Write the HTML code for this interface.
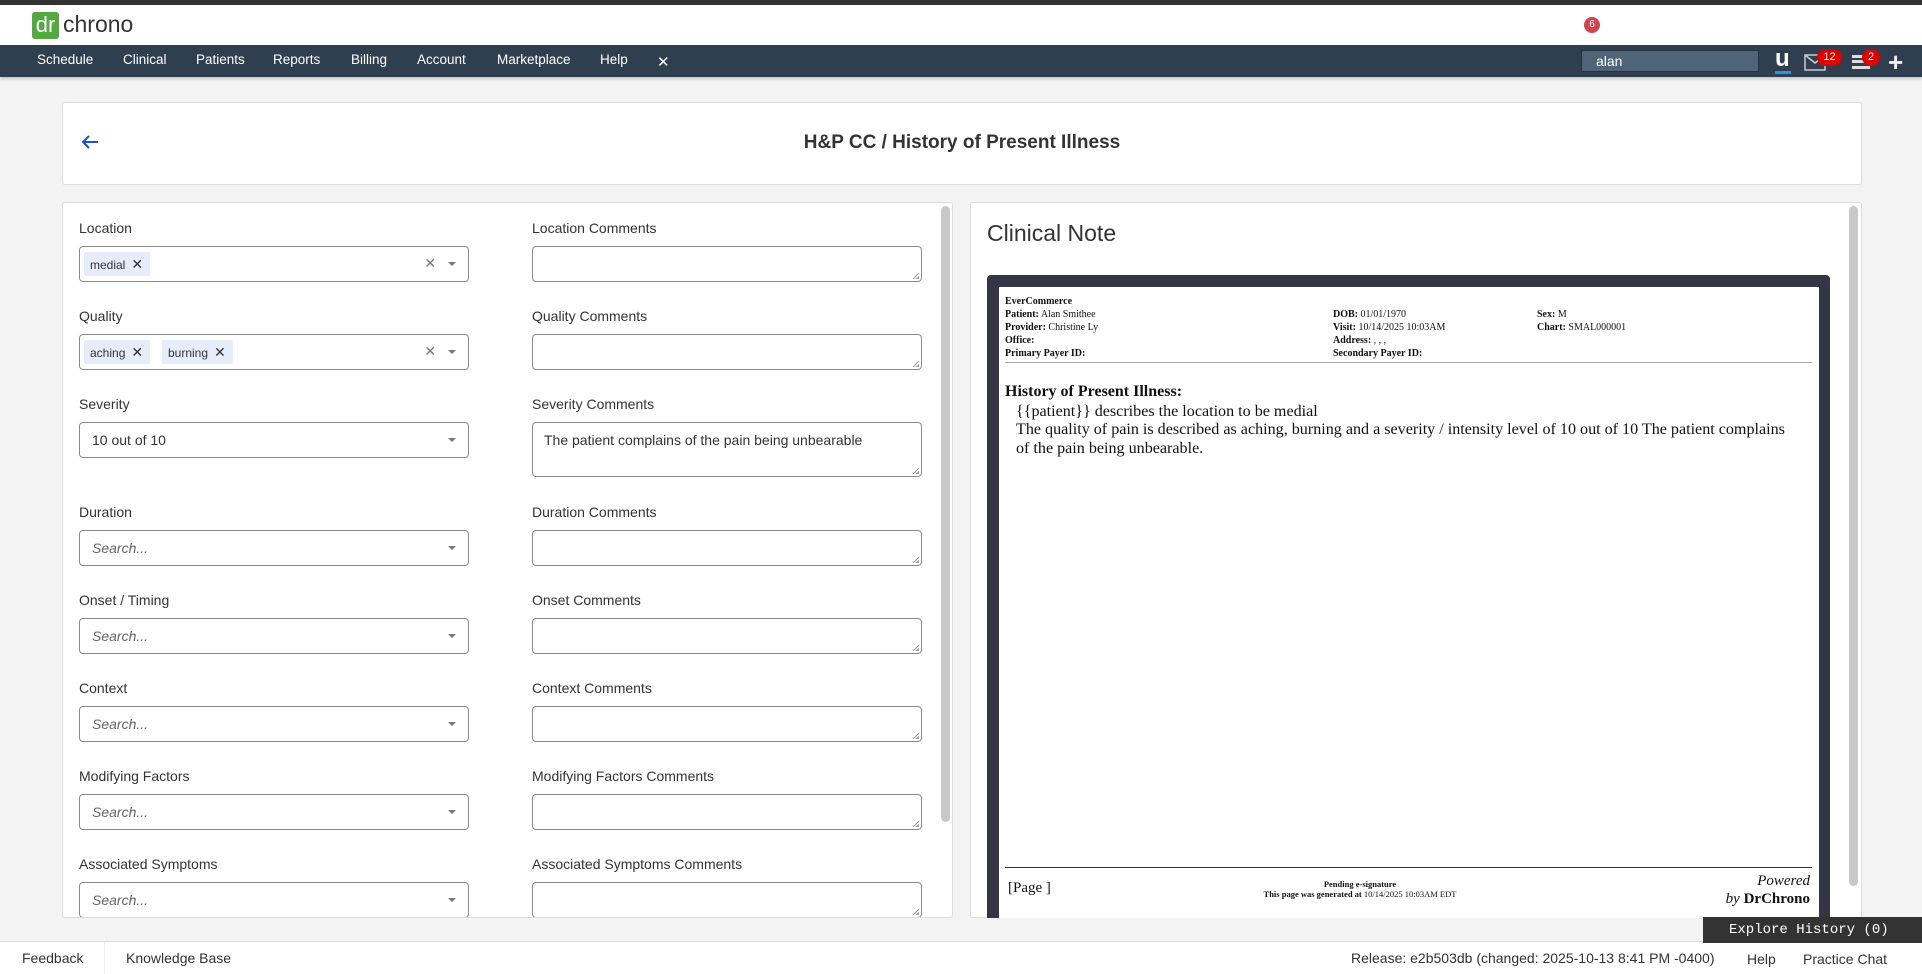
<!DOCTYPE html>
<html><head><meta charset="utf-8"><style>
*{box-sizing:border-box;margin:0;padding:0}
body{width:1922px;height:974px;overflow:hidden;background:#f3f3f3;font-family:"Liberation Sans",sans-serif;position:relative;color:#333}
.a{position:absolute}
.lab{position:absolute;font-size:14px;color:#333;white-space:nowrap}
.sel{position:absolute;width:390px;height:36px;border:1px solid #8a8a90;border-radius:4px;background:#fff}
.ta{position:absolute;width:390px;height:36px;border:1px solid #8a8a90;border-radius:4px;background:#fff}
.ta:after{content:"";position:absolute;right:2px;bottom:2px;width:6px;height:6px;background:linear-gradient(135deg,transparent 45%,#999 45%,#999 55%,transparent 55%,transparent 75%,#999 75%)}
.ph{position:absolute;left:12px;top:9px;font-size:14px;font-style:italic;color:#666}
.car{position:absolute;right:12px;top:15px;border-left:4px solid transparent;border-right:4px solid transparent;border-top:4px solid #777}
.tag{position:absolute;top:5px;height:24px;background:#e6ecfb;font-size:12px;line-height:24px;padding:0 7px 0 6px;color:#333;white-space:nowrap}
.tag b{font-weight:normal;font-size:14px;margin-left:6px}
.nav span{position:absolute;top:52px;color:#fff;font-size:13.5px}
.n{font-family:"Liberation Serif",serif;color:#111;position:absolute;white-space:nowrap}
.hd{font-size:10px}
</style></head><body>
<div class="a" style="left:0;top:0;width:1922px;height:5px;background:#333"></div>
<div class="a" style="left:0;top:5px;width:1922px;height:40px;background:#fff"></div>
<div class="a" style="left:32px;top:12px;width:27px;height:27px;background:#53a93f;border-radius:3px;color:#fff;font-size:22px;line-height:26px;text-align:center">dr</div>
<div class="a" style="left:63px;top:11px;font-size:23px;color:#333">chrono</div>
<div class="a" style="left:1584px;top:17px;width:16px;height:16px;border-radius:8px;background:#d04450;color:#fff;font-size:10px;line-height:16px;text-align:center">6</div>
<div class="a nav" style="left:0;top:45px;width:1922px;height:32px;background:#2f3f50;box-shadow:0 2px 3px rgba(0,0,0,.2)"></div>
<div class="nav">
<span style="left:37px">Schedule</span><span style="left:123px">Clinical</span><span style="left:196px">Patients</span><span style="left:273px">Reports</span><span style="left:351px">Billing</span><span style="left:417px">Account</span><span style="left:497px">Marketplace</span><span style="left:600px">Help</span><span style="left:657px;font-size:15px;top:53px">✕</span>
</div>
<div class="a" style="left:1581px;top:50px;width:178px;height:22px;background:#506479;border:1px solid #27323f;border-radius:2px;color:#fff;font-size:14px;line-height:20px;padding-left:14px">alan</div>
<div class="a" style="left:1775px;top:48px;color:#fff;font-size:24px;font-weight:bold;line-height:22px">u</div>
<div class="a" style="left:1775px;top:71px;width:16px;height:3px;background:#1b9ce4"></div>
<svg class="a" style="left:1804px;top:54px" width="22" height="17" viewBox="0 0 22 17"><rect x="1" y="1" width="20" height="15" fill="none" stroke="#ccc" stroke-width="1.5"/><path d="M1 1 L11 9 L21 1" fill="none" stroke="#ccc" stroke-width="1.5"/></svg>
<div class="a" style="left:1817px;top:49px;width:25px;height:17px;border-radius:9px;background:#d00;color:#fff;font-size:11px;line-height:17px;text-align:center">12</div>
<div class="a" style="left:1852px;top:55px;width:18px;height:14px;border-top:3px solid #ddd;border-bottom:3px solid #ddd"></div>
<div class="a" style="left:1852px;top:60px;width:18px;height:3px;background:#ddd"></div>
<div class="a" style="left:1862px;top:49px;width:18px;height:17px;border-radius:9px;background:#d00;color:#fff;font-size:11px;line-height:17px;text-align:center">2</div>
<div class="a" style="left:1888px;top:52px;color:#eee;font-size:26px;font-weight:bold;line-height:20px">+</div>

<div class="a" style="left:62px;top:102px;width:1800px;height:83px;background:#fff;border:1px solid #ddd;border-radius:3px"></div>
<svg class="a" style="left:81px;top:134px" width="18" height="16" viewBox="0 0 18 16"><path d="M17 8 H2 M8 2 L2 8 L8 14" fill="none" stroke="#1d4ed8" stroke-width="2"/></svg>
<div class="a" style="left:0;top:132px;width:1924px;text-align:center;font-size:19px;font-weight:bold;color:#333">H&amp;P CC / History of Present Illness</div>

<div class="a" style="left:62px;top:202px;width:891px;height:716px;background:#fff;border:1px solid #ddd;border-radius:3px"></div>
<div class="a" style="left:941px;top:206px;width:9px;height:616px;background:#c8c8c8;border-radius:5px"></div>

<div class="lab" style="left:79px;top:220px">Location</div><div class="lab" style="left:532px;top:220px">Location Comments</div>
<div class="sel" style="left:79px;top:246px"><div class="tag" style="left:4px">medial<b>✕</b></div><span class="a" style="right:32px;top:8px;color:#777;font-size:14px">✕</span><div class="car"></div></div>
<div class="ta" style="left:532px;top:246px"></div>

<div class="lab" style="left:79px;top:308px">Quality</div><div class="lab" style="left:532px;top:308px">Quality Comments</div>
<div class="sel" style="left:79px;top:334px"><div class="tag" style="left:4px">aching<b>✕</b></div><div class="tag" style="left:82px">burning<b>✕</b></div><span class="a" style="right:32px;top:8px;color:#777;font-size:14px">✕</span><div class="car"></div></div>
<div class="ta" style="left:532px;top:334px"></div>

<div class="lab" style="left:79px;top:396px">Severity</div><div class="lab" style="left:532px;top:396px">Severity Comments</div>
<div class="sel" style="left:79px;top:422px"><div class="ph" style="font-style:normal;color:#333">10 out of 10</div><div class="car"></div></div>
<div class="ta" style="left:532px;top:422px;height:55px"><div class="a" style="left:11px;top:9px;font-size:14px;color:#333">The patient complains of the pain being unbearable</div></div>

<div class="lab" style="left:79px;top:504px">Duration</div><div class="lab" style="left:532px;top:504px">Duration Comments</div>
<div class="sel" style="left:79px;top:530px"><div class="ph">Search...</div><div class="car"></div></div><div class="ta" style="left:532px;top:530px"></div>

<div class="lab" style="left:79px;top:592px">Onset / Timing</div><div class="lab" style="left:532px;top:592px">Onset Comments</div>
<div class="sel" style="left:79px;top:618px"><div class="ph">Search...</div><div class="car"></div></div><div class="ta" style="left:532px;top:618px"></div>

<div class="lab" style="left:79px;top:680px">Context</div><div class="lab" style="left:532px;top:680px">Context Comments</div>
<div class="sel" style="left:79px;top:706px"><div class="ph">Search...</div><div class="car"></div></div><div class="ta" style="left:532px;top:706px"></div>

<div class="lab" style="left:79px;top:768px">Modifying Factors</div><div class="lab" style="left:532px;top:768px">Modifying Factors Comments</div>
<div class="sel" style="left:79px;top:794px"><div class="ph">Search...</div><div class="car"></div></div><div class="ta" style="left:532px;top:794px"></div>

<div class="lab" style="left:79px;top:856px">Associated Symptoms</div><div class="lab" style="left:532px;top:856px">Associated Symptoms Comments</div>
<div class="a" style="left:63px;top:882px;width:878px;height:35px;overflow:hidden">
<div class="sel" style="left:16px;top:0"><div class="ph">Search...</div><div class="car"></div></div><div class="ta" style="left:469px;top:0"></div></div>

<div class="a" style="left:970px;top:202px;width:892px;height:716px;background:#fff;border:1px solid #ddd;border-radius:3px"></div>
<div class="a" style="left:1849px;top:206px;width:9px;height:680px;background:#c8c8c8;border-radius:5px"></div>
<div class="a" style="left:987px;top:220px;font-size:23px;color:#333">Clinical Note</div>
<div class="a" style="left:987px;top:275px;width:843px;height:643px;background:#343545;border-radius:4px 4px 0 0"></div>
<div class="a" style="left:999px;top:287px;width:820px;height:631px;background:#fff"></div>
<div class="n hd" style="left:1005px;top:296px;font-weight:bold">EverCommerce</div>
<div class="n hd" style="left:1005px;top:309px"><b>Patient:</b> Alan Smithee</div>
<div class="n hd" style="left:1005px;top:322px"><b>Provider:</b> Christine Ly</div>
<div class="n hd" style="left:1005px;top:335px"><b>Office:</b></div>
<div class="n hd" style="left:1005px;top:348px"><b>Primary Payer ID:</b></div>
<div class="n hd" style="left:1333px;top:309px"><b>DOB:</b> 01/01/1970</div>
<div class="n hd" style="left:1333px;top:322px"><b>Visit:</b> 10/14/2025 10:03AM</div>
<div class="n hd" style="left:1333px;top:335px"><b>Address:</b> , , ,</div>
<div class="n hd" style="left:1333px;top:348px"><b>Secondary Payer ID:</b></div>
<div class="n hd" style="left:1537px;top:309px"><b>Sex:</b> M</div>
<div class="n hd" style="left:1537px;top:322px"><b>Chart:</b> SMAL000001</div>
<div class="a" style="left:1005px;top:362px;width:807px;height:1px;background:#aaa"></div>
<div class="n" style="left:1005px;top:383px;font-size:16px;font-weight:bold">History of Present Illness:</div>
<div class="n" style="left:1016px;top:403px;font-size:16.1px">{{patient}} describes the location to be medial</div>
<div class="n" style="left:1016px;top:421px;font-size:16.1px">The quality of pain is described as aching, burning and a severity / intensity level of 10 out of 10 The patient complains</div>
<div class="n" style="left:1016px;top:440px;font-size:16.1px">of the pain being unbearable.</div>
<div class="a" style="left:1005px;top:867px;width:807px;height:1px;background:#333"></div>
<div class="n" style="left:1008px;top:880px;font-size:15px">[Page ]</div>
<div class="n" style="left:1200px;top:879px;width:320px;text-align:center;font-size:8.5px;line-height:10px"><b>Pending e-signature</b><br><b>This page was generated at</b> 10/14/2025 10:03AM EDT</div>
<div class="n" style="left:1700px;top:872px;width:110px;text-align:right;font-size:15px;line-height:18px"><i>Powered</i><br><i>by</i> <b>DrChrono</b></div>

<div class="a" style="left:0;top:941px;width:1922px;height:33px;background:#fff;border-top:1px solid #ddd"></div>
<div class="a" style="left:104px;top:942px;width:1px;height:32px;background:#eee"></div>
<div class="a" style="left:22px;top:950px;font-size:14px;color:#333">Feedback</div>
<div class="a" style="left:126px;top:950px;font-size:14px;color:#333">Knowledge Base</div>
<div class="a" style="left:1351px;top:950px;font-size:14px;color:#333">Release: e2b503db (changed: 2025-10-13 8:41 PM -0400)</div>
<div class="a" style="left:1747px;top:951px;font-size:14px;color:#333">Help</div>
<div class="a" style="left:1803px;top:951px;font-size:14px;color:#333">Practice Chat</div>
<div class="a" style="left:1703px;top:917px;width:219px;height:26px;background:#333;color:#fff;font-family:'Liberation Mono',monospace;font-size:14px;line-height:26px;padding-left:26px">Explore History (0)</div>
</body></html>
